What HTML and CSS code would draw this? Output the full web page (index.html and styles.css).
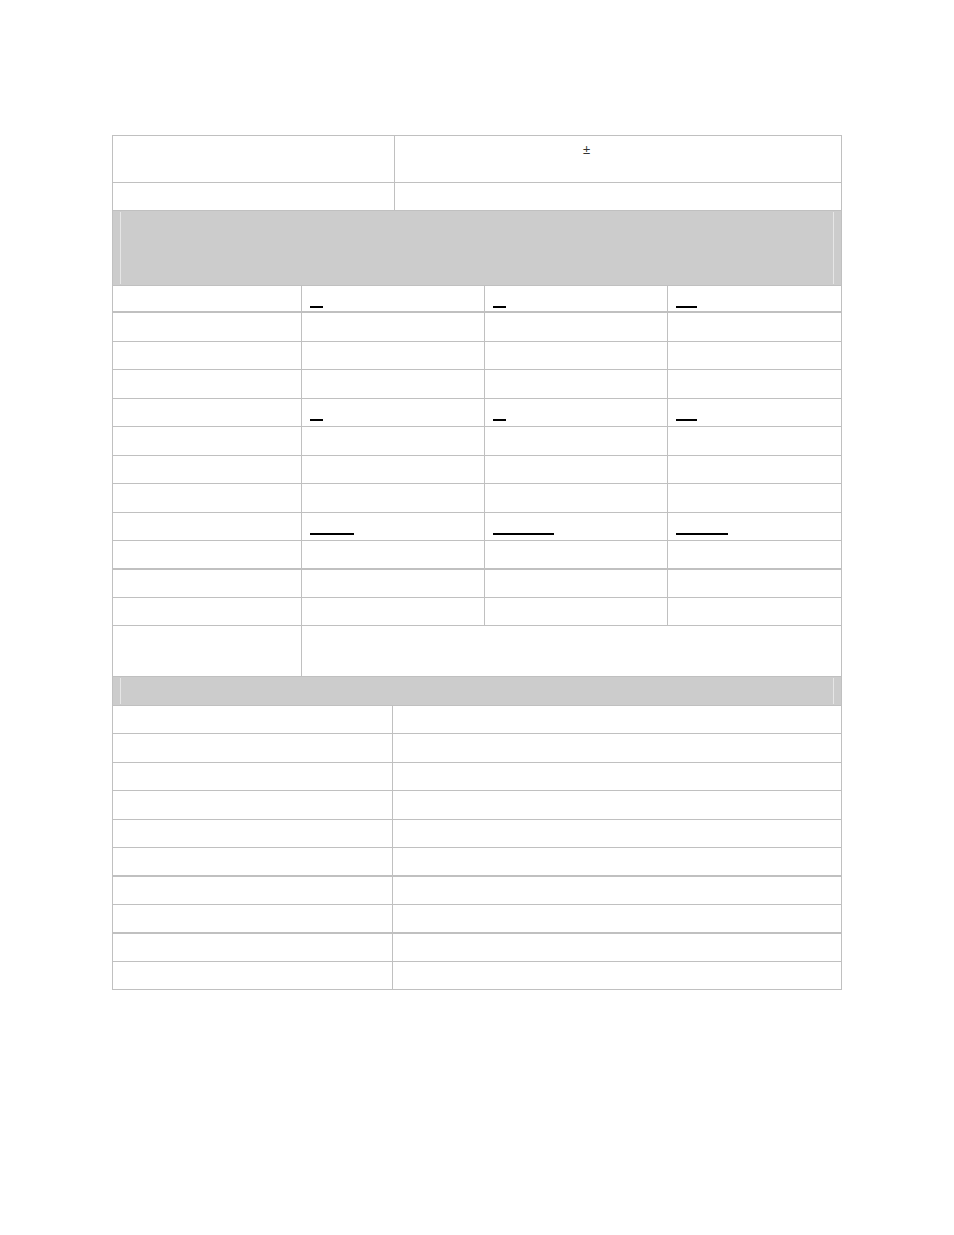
FILE: index.html
```html
<!DOCTYPE html>
<html>
<head>
<meta charset="utf-8">
<link rel="stylesheet" href="styles.css">
</head>
<body>
<div class="sheet">
  <div class="row top h46"><div class="cell"></div><div class="cell div pm"><span class="pmsign">±</span></div></div>
  <div class="row top h27"><div class="cell"></div><div class="cell div"></div></div>
  <div class="band h74"><div class="band-in"></div></div>

  <div class="row mid h25 thick head"><div class="cell"></div><div class="cell div"><span class="ul w12"></span></div><div class="cell div"><span class="ul w13"></span></div><div class="cell div"><span class="ul w21"></span></div></div>
  <div class="row mid h28"><div class="cell"></div><div class="cell div"></div><div class="cell div"></div><div class="cell div"></div></div>
  <div class="row mid h27"><div class="cell"></div><div class="cell div"></div><div class="cell div"></div><div class="cell div"></div></div>
  <div class="row mid h28"><div class="cell"></div><div class="cell div"></div><div class="cell div"></div><div class="cell div"></div></div>
  <div class="row mid h27"><div class="cell"></div><div class="cell div"><span class="ul w12"></span></div><div class="cell div"><span class="ul w13"></span></div><div class="cell div"><span class="ul w21"></span></div></div>
  <div class="row mid h28"><div class="cell"></div><div class="cell div"></div><div class="cell div"></div><div class="cell div"></div></div>
  <div class="row mid h27"><div class="cell"></div><div class="cell div"></div><div class="cell div"></div><div class="cell div"></div></div>
  <div class="row mid h28"><div class="cell"></div><div class="cell div"></div><div class="cell div"></div><div class="cell div"></div></div>
  <div class="row mid h27"><div class="cell"></div><div class="cell div"><span class="ul w44"></span></div><div class="cell div"><span class="ul w61"></span></div><div class="cell div"><span class="ul w52"></span></div></div>
  <div class="row mid h27 thick"><div class="cell"></div><div class="cell div"></div><div class="cell div"></div><div class="cell div"></div></div>
  <div class="row mid h27"><div class="cell"></div><div class="cell div"></div><div class="cell div"></div><div class="cell div"></div></div>
  <div class="row mid h27"><div class="cell"></div><div class="cell div"></div><div class="cell div"></div><div class="cell div"></div></div>
  <div class="row merged h50"><div class="cell"></div><div class="cell div"></div></div>
  <div class="band h28"><div class="band-in"></div></div>

  <div class="row bot h27"><div class="cell"></div><div class="cell div"></div></div>
  <div class="row bot h28"><div class="cell"></div><div class="cell div"></div></div>
  <div class="row bot h27"><div class="cell"></div><div class="cell div"></div></div>
  <div class="row bot h28"><div class="cell"></div><div class="cell div"></div></div>
  <div class="row bot h27"><div class="cell"></div><div class="cell div"></div></div>
  <div class="row bot h27 thick"><div class="cell"></div><div class="cell div"></div></div>
  <div class="row bot h27"><div class="cell"></div><div class="cell div"></div></div>
  <div class="row bot h27 thick"><div class="cell"></div><div class="cell div"></div></div>
  <div class="row bot h27"><div class="cell"></div><div class="cell div"></div></div>
  <div class="row bot h27"><div class="cell"></div><div class="cell div"></div></div>
</div>
</body>
</html>
```

FILE: styles.css
```css
html, body {
  margin: 0;
  padding: 0;
  background: #ffffff;
  font-family: "Liberation Sans", Arial, sans-serif;
}

.sheet {
  margin: 135px 0 0 112px;
  width: 730px;
  box-sizing: border-box;
  border-top: 1px solid #c0c0c0;
  border-left: 1px solid #c0c0c0;
  border-right: 1px solid #c0c0c0;
}

.row {
  display: grid;
  border-bottom: 1px solid #c0c0c0;
}

.row.thick {
  border-bottom: 2px solid #c0c0c0;
}

.top { grid-template-columns: 281px 447px; }
.mid { grid-template-columns: 188px 183px 183px 174px; }
.merged { grid-template-columns: 188px 540px; }
.bot { grid-template-columns: 279px 449px; }

.cell {
  box-sizing: border-box;
  position: relative;
}

.cell.div {
  border-left: 1px solid #c0c0c0;
}

.h25 { height: 25px; }
.h27 { height: 27px; }
.h28 { height: 28px; }
.h46 { height: 46px; }
.h50 { height: 50px; }
.h74 { height: 74px; }

.band {
  background: #cccccc;
  border-bottom: 1px solid #c0c0c0;
  box-sizing: border-box;
  display: flex;
  padding: 1px 7px;
}

.band.h74 { height: 75px; }
.band.h28 { height: 29px; }

.band-in {
  flex: 1;
  border-left: 1px solid #e6e6e6;
  border-right: 1px solid #e6e6e6;
}

.pm {
  padding: 7px 0 0 188px;
}

.pmsign {
  font-size: 13px;
  line-height: 13px;
  color: #333333;
  display: block;
}

.ul {
  position: absolute;
  left: 8px;
  bottom: 5px;
  height: 0;
  border-bottom: 2px solid #000000;
}

.head .ul {
  bottom: 3px;
}

.w12 { width: 13px; }
.w13 { width: 13px; }
.w21 { width: 21px; }
.w44 { width: 44px; }
.w61 { width: 61px; }
.w52 { width: 52px; }
```
